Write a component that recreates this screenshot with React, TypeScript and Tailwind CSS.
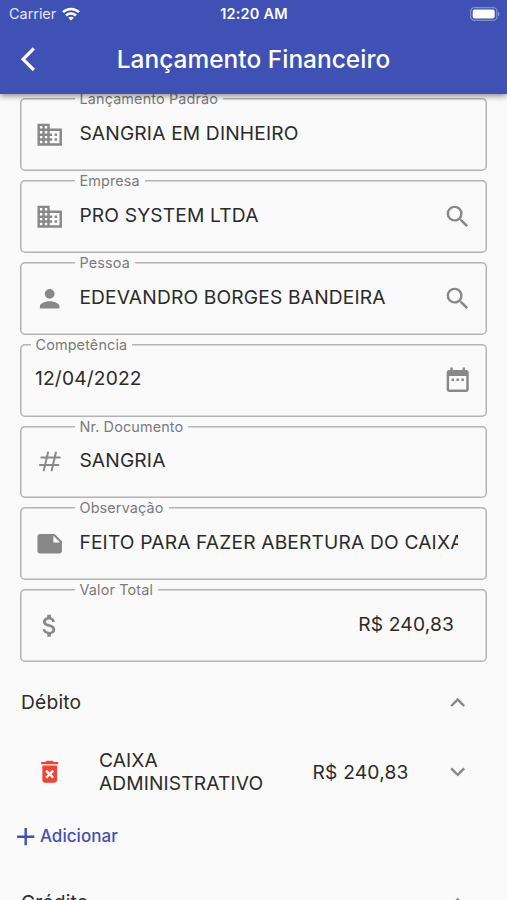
import type { ReactNode } from 'react';
import {
  MdAdd,
  MdAttachMoney,
  MdBusiness,
  MdDateRange,
  MdDeleteForever,
  MdExpandLess,
  MdExpandMore,
  MdNote,
  MdPerson,
  MdSearch,
} from 'react-icons/md';

const ICON = 29.4;

const HashIcon = () => (
  <svg width={ICON} height={ICON} viewBox="0 0 29.4 29.4" fill="none" stroke="currentColor" strokeWidth="2" strokeLinecap="round">
    <path d="M13 5.4L8.8 23.4M20.9 5.4L16.7 23.4M6.4 10.4H24.8M4.9 18.1H23.3" />
  </svg>
);

const BackIcon = () => (
  <svg width="28.4" height="28.4" viewBox="0 0 24 24" fill="currentColor">
    <path d="M11.67 3.87L9.9 2.1 0 12l9.9 9.9 1.77-1.77L3.54 12z" stroke="currentColor" strokeWidth="0.3" />
  </svg>
);

const WifiIcon = () => (
  <svg width="18" height="14" viewBox="0 0 18 14" fill="none" stroke="currentColor" strokeWidth="2.5">
    <path d="M1 5.2C5.4 .8 12.6 .8 17 5.2" />
    <path d="M4 8.5C6.8 5.8 11.2 5.8 14 8.5" />
    <path d="M9 13.6L6.2 10.7C7.8 9.3 10.2 9.3 11.8 10.7Z" fill="currentColor" stroke="none" />
  </svg>
);

const BatteryIcon = () => (
  <svg width="31" height="14" viewBox="0 0 31 14">
    <rect x="0.7" y="0.7" width="26.2" height="12.6" rx="3.6" fill="none" stroke="#fff" strokeOpacity="0.35" strokeWidth="1.3" />
    <rect x="2.7" y="2.6" width="22" height="8.8" rx="1.8" fill="#fff" />
    <path d="M28.2 4.8c1.6.6 1.6 3.8 0 4.4z" fill="#fff" fillOpacity="0.45" />
  </svg>
);

type FieldProps = {
  label: string;
  value: string;
  icon?: ReactNode;
  action?: ReactNode;
  alignRight?: boolean;
};

const Field = ({ label, value, icon, action, alignRight }: FieldProps) => (
  <div className="relative flex h-[72.8px] items-center rounded-[5px] pr-[15px] pl-[15px] shadow-[inset_0_0_0_1.5px_#b4b4b4]">
    <span
      className={`absolute -top-2 bg-[#fafafa] px-[5px] text-[14.4px] leading-[18px] tracking-[0.14px] whitespace-nowrap text-[#7b7b7b] ${icon ? 'left-[54.5px]' : 'left-[10.5px]'}`}
    >
      {label}
    </span>
    {icon && <span className="mr-[15px] shrink-0 text-[#888]">{icon}</span>}
    <span
      className={`min-w-0 flex-1 overflow-hidden pb-[3.6px] text-[19.2px] leading-6 tracking-[0.16px] whitespace-nowrap text-[#2b2b2b] ${alignRight ? 'mr-[18px] text-right' : 'mr-[14px]'}`}
    >
      {value}
    </span>
    {action && <span className="shrink-0 text-[#888]">{action}</span>}
  </div>
);

const App = () => {
  const fields: FieldProps[] = [
    { label: 'Lançamento Padrão', value: 'SANGRIA EM DINHEIRO', icon: <MdBusiness size={ICON} /> },
    { label: 'Empresa', value: 'PRO SYSTEM LTDA', icon: <MdBusiness size={ICON} />, action: <MdSearch size={ICON} /> },
    { label: 'Pessoa', value: 'EDEVANDRO BORGES BANDEIRA', icon: <MdPerson size={ICON} />, action: <MdSearch size={ICON} /> },
    { label: 'Competência', value: '12/04/2022', action: <MdDateRange size={ICON} /> },
    { label: 'Nr. Documento', value: 'SANGRIA', icon: <HashIcon /> },
    { label: 'Observação', value: 'FEITO PARA FAZER ABERTURA DO CAIXA', icon: <MdNote size={ICON} /> },
    { label: 'Valor Total', value: 'R$ 240,83', icon: <MdAttachMoney size={ICON} />, alignRight: true },
  ];

  return (
    <div className="flex h-[900px] w-[507px] flex-col overflow-hidden bg-[#fafafa] font-['Inter',sans-serif]">
      <header className="relative z-10 h-[94px] shrink-0 bg-[#3f51b5] text-white shadow-[0_2px_6px_rgba(0,0,0,0.45)]">
        <div className="grid h-[27px] grid-cols-3 items-center pr-[6px] pl-[9px] text-[14.5px] leading-[27px]">
          <div className="flex items-center gap-[6px]">
            <span className="tracking-[-0.05px] text-white/85">Carrier</span>
            <WifiIcon />
          </div>
          <span className="pr-[2px] text-center font-semibold tracking-[0.2px] whitespace-nowrap">12:20 AM</span>
          <span className="justify-self-end">
            <BatteryIcon />
          </span>
        </div>
        <div className="grid h-[65px] grid-cols-[60px_1fr_60px] items-center">
          <span className="pl-[20.5px]">
            <BackIcon />
          </span>
          <h1 className="text-center text-[24.4px] font-medium tracking-[0.05px] whitespace-nowrap">Lançamento Financeiro</h1>
        </div>
      </header>

      <main className="flex shrink-0 flex-col px-5 pt-[4.4px]">
        <div className="flex flex-col gap-[9px]">
          {fields.map((field) => (
            <Field key={field.label} {...field} />
          ))}
        </div>

        <div className="mt-[26px] flex h-[29px] items-center justify-between pr-[15px] pl-[1px] text-[19.2px] text-[#2b2b2b]">
          <span className="tracking-[0.2px]">Débito</span>
          <MdExpandLess size={ICON} className="text-[#888]" />
        </div>

        <div className="mt-[29px] flex h-[52px] items-center pr-[15px] pl-[15px] text-[19.2px] text-[#2b2b2b]">
          <MdDeleteForever size={ICON} className="shrink-0 text-[#f44336]" />
          <span className="ml-[34.5px] w-[190px] leading-[23px] tracking-[0.12px]">CAIXA ADMINISTRATIVO</span>
          <span className="ml-auto tracking-[0.2px] whitespace-nowrap">R$ 240,83</span>
          <MdExpandMore size={ICON} className="ml-[34px] shrink-0 text-[#888]" />
        </div>

        <button className="mt-[24px] -ml-[9.5px] flex h-[29px] items-center self-start text-[17px] font-medium text-[#3f51b5]">
          <MdAdd size={ICON} />
          <span className="tracking-[0.05px]">Adicionar</span>
        </button>

        <div className="mt-[37px] flex h-[29px] items-center justify-between pr-[15px] pl-[1px] text-[19.2px] text-[#2b2b2b]">
          <span className="tracking-[0.2px]">Crédito</span>
          <MdExpandLess size={ICON} className="text-[#888]" />
        </div>
      </main>
    </div>
  );
};

export default App;
